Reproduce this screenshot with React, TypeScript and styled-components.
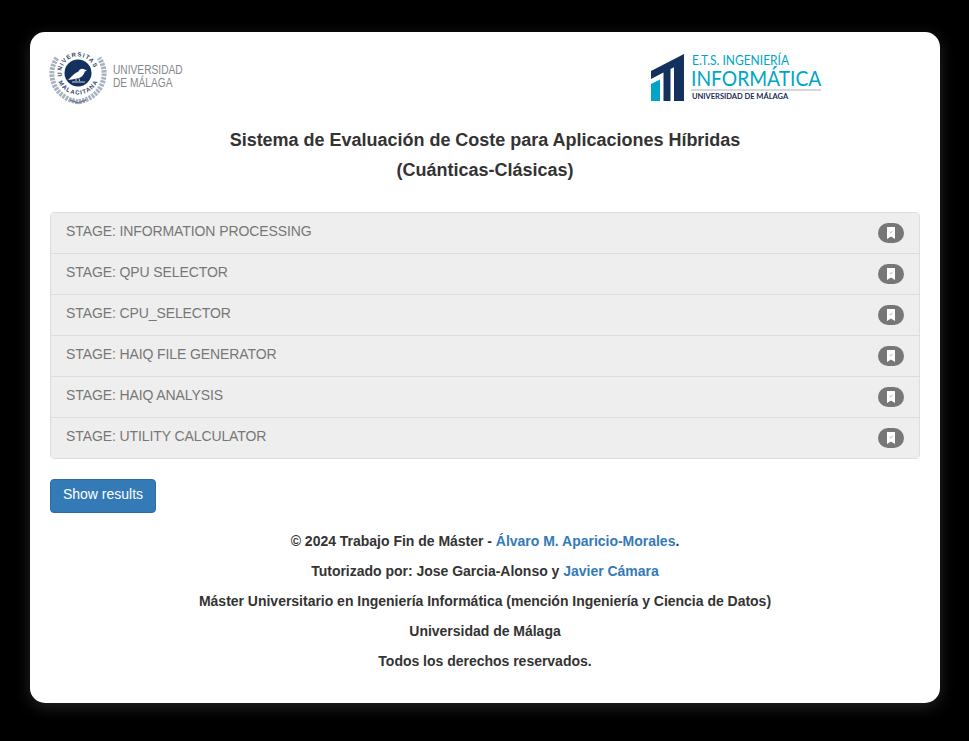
import styled, { createGlobalStyle } from 'styled-components';

const stages = [
  'STAGE: INFORMATION PROCESSING',
  'STAGE: QPU SELECTOR',
  'STAGE: CPU_SELECTOR',
  'STAGE: HAIQ FILE GENERATOR',
  'STAGE: HAIQ ANALYSIS',
  'STAGE: UTILITY CALCULATOR',
];

const GlobalStyle = createGlobalStyle`
  html, body {
    margin: 0;
    padding: 0;
    background: #000;
    height: 741px;
    overflow: hidden;
  }
  body {
    font-family: "Helvetica Neue", Helvetica, Arial, "Liberation Sans", sans-serif;
    font-size: 14px;
    line-height: 20px;
    color: #333;
  }
`;

const Page = styled.div`
  padding: 32px 29px 38px 30px;
`;

const Card = styled.main`
  box-sizing: border-box;
  width: 910px;
  height: 671px;
  padding: 20px;
  background: #fff;
  border-radius: 15px;
  box-shadow: 0 4px 16px rgba(255, 255, 255, 0.14);
`;

const LogoRow = styled.header`
  display: flex;
  justify-content: space-between;
  align-items: flex-start;
  height: 50px;
  padding-right: 99px;
`;

const UmaLogo = styled.div`
  display: flex;
  align-items: flex-start;
  gap: 9px;
`;

const SealSvg = styled.svg`
  overflow: visible;
`;

const UmaName = styled.div`
  margin-top: 12px;
  font-family: "Liberation Sans", sans-serif;
  font-size: 12px;
  line-height: 13px;
  color: #85888c;
  transform: scaleX(0.85);
  transform-origin: left center;
  white-space: nowrap;
`;

const EtsLogo = styled.div`
  display: flex;
  gap: 7px;
  align-items: flex-start;
  margin-top: 2px;
`;

const EtsText = styled.div`
  display: flex;
  flex-direction: column;
  width: 130px;
  white-space: nowrap;
  font-family: Lato, "Liberation Sans", sans-serif;
`;

const EtsTop = styled.span`
  margin-left: 1px;
  font-size: 12.500px;
  line-height: 13px;
  color: #00a5c6;
  transform: scaleX(0.96);
  transform-origin: left center;
`;

const EtsMain = styled.span`
  font-size: 21px;
  line-height: 22px;
  color: #00a5c6;
  transform: scaleX(0.915);
  transform-origin: left center;
`;

const EtsRule = styled.span`
  height: 2px;
  background: #d5d8da;
`;

const EtsBottom = styled.span`
  margin-top: 1px;
  margin-left: 1px;
  font-size: 7.500px;
  line-height: 10px;
  font-weight: 700;
  color: #1c2a55;
`;

const Title = styled.h1`
  margin: 23px 0 27px;
  font-size: 18px;
  line-height: 30px;
  font-weight: 700;
  letter-spacing: -0.015px;
  text-align: center;
`;

const StageList = styled.ul`
  margin: 0 0 20px;
  padding: 0;
  list-style: none;
  border: 1px solid #ddd;
  border-radius: 4px;
`;

const StageRow = styled.li`
  display: flex;
  justify-content: space-between;
  height: 40px;
  padding: 8px 15px 0;
  box-sizing: border-box;
  background: #eee;
  color: #777;
  letter-spacing: -0.1px;
  & + & {
    border-top: 1px solid #ddd;
    height: 41px;
  }
`;

const Badge = styled.span`
  display: flex;
  align-items: center;
  justify-content: center;
  width: 26px;
  height: 20px;
  margin-top: 2px;
  border-radius: 10px;
  background: #777;
`;

const ResultsButton = styled.button`
  display: block;
  width: 106px;
  height: 34px;
  padding: 0 0 4px;
  font: inherit;
  color: #fff;
  background: #337ab7;
  border: 1px solid #2e6da4;
  border-radius: 4px;
`;

const Footer = styled.footer`
  margin-top: 13px;
  font-weight: 700;
  letter-spacing: -0.015px;
  text-align: center;
`;

const FooterLine = styled.p`
  margin: 0;
  line-height: 30px;
`;

const FooterLink = styled.a`
  color: #337ab7;
  text-decoration: none;
`;

function BookmarkIcon() {
  return (
    <svg width="10" height="12" viewBox="0 0 10 12" aria-hidden="true">
      <path d="M1 0H9V12L5 9.500L1 12Z" fill="#fff" />
      <path d="M3.500 5L4.600 6L6.600 3.800" stroke="#9aa0a8" strokeWidth="0.800" fill="none" />
    </svg>
  );
}

function UmaSeal() {
  return (
    <SealSvg width="54" height="52" viewBox="0 0 54 52" aria-hidden="true">
      <defs>
        <path id="sealTop" d="M13.600 29A16.500 16.500 0 1 1 42.400 29" />
        <path id="sealBottom" d="M6.500 21A21.500 21.500 0 0 0 49.500 21" />
      </defs>
      <path
        d="M7 6C2 13 0 22 4 32C8 42 17 48 28 50C39 48 48 42 52 32C56 22 54 13 49 6"
        fill="none"
        stroke="#a9b2c0"
        strokeWidth="5"
        strokeDasharray="2.500 1"
      />
      <path d="M20 48L28 51L36 48" fill="none" stroke="#6f7d94" strokeWidth="1.500" />
      <text fontSize="6" fontWeight="700" fill="#33456a" fontFamily="Liberation Sans, sans-serif" letterSpacing="1">
        <textPath href="#sealTop" startOffset="7%">UNIVERSITAS</textPath>
      </text>
      <text fontSize="6" fontWeight="700" fill="#33456a" fontFamily="Liberation Sans, sans-serif" letterSpacing="1">
        <textPath href="#sealBottom" startOffset="14%">MALACITANA</textPath>
      </text>
      <circle cx="28" cy="21" r="13.500" fill="#14305c" />
      <path
        d="M18 28C21 26 23.500 21 28 20C29 17.500 32 15.500 34.500 17.500L37 18.500L34.800 19.500C34 23 31 26 27 26.500L22 27.500Z"
        fill="#fff"
      />
      <path d="M26 27L26 29M29 26.500L29.500 29M22 30H35" stroke="#fff" strokeWidth="0.800" />
    </SealSvg>
  );
}

function EtsMark() {
  return (
    <svg width="33" height="47" viewBox="0 0 33 47" aria-hidden="true">
      <path d="M0 17L33 0V47H23V13.200L19.500 15V47H12.500V18.600L0 25Z" fill="#14305c" />
      <path d="M0 30L9 25.400V47H0Z" fill="#00a5c6" />
    </svg>
  );
}

function App() {
  return (
    <Page>
      <GlobalStyle />
      <Card>
        <LogoRow>
          <UmaLogo>
            <UmaSeal />
            <UmaName>
              UNIVERSIDAD
              <br />
              DE MÁLAGA
            </UmaName>
          </UmaLogo>
          <EtsLogo>
            <EtsMark />
            <EtsText>
              <EtsTop>E.T.S. INGENIERÍA</EtsTop>
              <EtsMain>INFORMÁTICA</EtsMain>
              <EtsRule />
              <EtsBottom>UNIVERSIDAD DE MÁLAGA</EtsBottom>
            </EtsText>
          </EtsLogo>
        </LogoRow>
        <Title>
          Sistema de Evaluación de Coste para Aplicaciones Híbridas
          <br />
          (Cuánticas-Clásicas)
        </Title>
        <StageList>
          {stages.map((stage) => (
            <StageRow key={stage}>
              {stage}
              <Badge>
                <BookmarkIcon />
              </Badge>
            </StageRow>
          ))}
        </StageList>
        <ResultsButton type="button">Show results</ResultsButton>
        <Footer>
          <FooterLine>
            © 2024 Trabajo Fin de Máster - <FooterLink href="#">Álvaro M. Aparicio-Morales</FooterLink>.
          </FooterLine>
          <FooterLine>
            Tutorizado por: Jose Garcia-Alonso y <FooterLink href="#">Javier Cámara</FooterLink>
          </FooterLine>
          <FooterLine>Máster Universitario en Ingeniería Informática (mención Ingeniería y Ciencia de Datos)</FooterLine>
          <FooterLine>Universidad de Málaga</FooterLine>
          <FooterLine>Todos los derechos reservados.</FooterLine>
        </Footer>
      </Card>
    </Page>
  );
}

export default App;
